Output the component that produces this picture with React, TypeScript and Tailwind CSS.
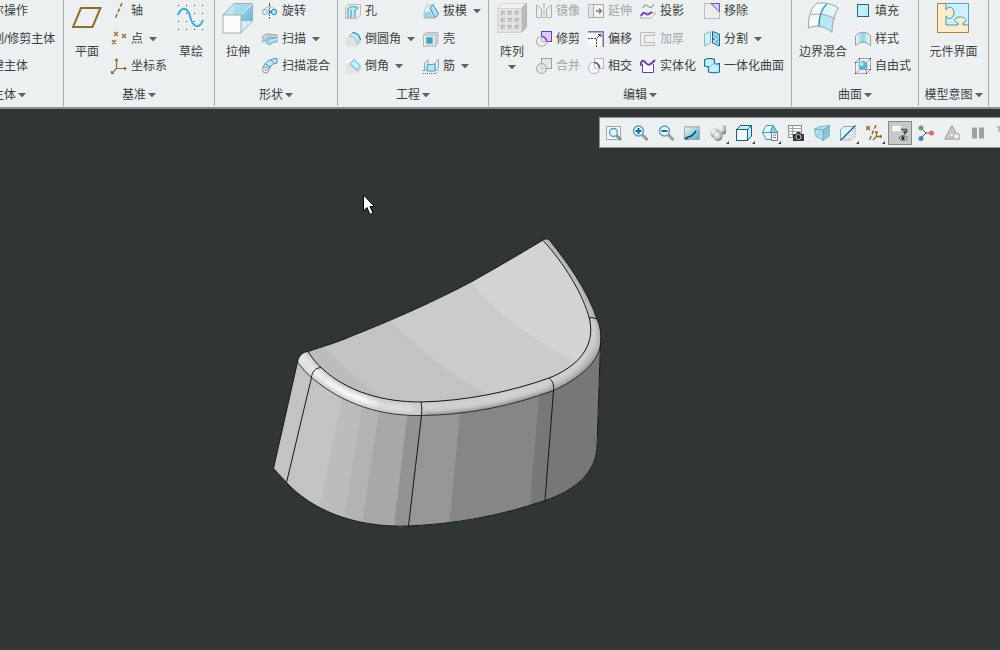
import React from 'react';

interface Tool {
  label: string;
  icon?: React.ReactNode;
  menu?: boolean;
  disabled?: boolean;
}

const BROWN = '#8f6c2f';
const BLUE = '#1f7fa8';
const PURPLE = '#6b3fa0';
const GREY = '#9da1a3';

const Small: React.FC<{ children: React.ReactNode }> = ({ children }) => (
  <svg className="h-4 w-4 shrink-0" viewBox="0 0 16 16" fill="none" aria-hidden="true">
    {children}
  </svg>
);

const Big: React.FC<{ children: React.ReactNode }> = ({ children }) => (
  <svg className="h-8 w-8 shrink-0" viewBox="0 0 32 32" fill="none" aria-hidden="true">
    {children}
  </svg>
);

const Caret: React.FC = () => (
  <svg className="h-1 w-2 shrink-0" viewBox="0 0 8 4" aria-hidden="true">
    <path d="M0 0H8L4 4.500Z" fill="#5f6466" />
  </svg>
);

const grid = (xs: number[], ys: number[]) => xs.flatMap(x => ys.map(y => [x, y]));

/* ---------- Large ribbon icons ---------- */

const planeIcon = (
  <Big>
    <path d="M10 6H29.500L21.500 25H2Z" stroke={BROWN} strokeWidth="2" />
  </Big>
);

const sketchIcon = (
  <Big>
    {grid([3, 11, 19, 27], [3, 11, 19, 27]).map(([x, y]) => (
      <rect key={`${x}-${y}`} x={x} y={y} width="1" height="1" fill="#444" />
    ))}
    <path d="M3 13C6 5 12 4 15 14C17 24 24 29 28 18" stroke="#3cabd9" strokeWidth="2" />
  </Big>
);

const extrudeIcon = (
  <Big>
    <defs>
      <linearGradient id="glass" x1="0" y1="0" x2="1" y2="1">
        <stop stopColor="#b4e4f3" />
        <stop offset="1" stopColor="#6db4d0" />
      </linearGradient>
    </defs>
    <path d="M1 13L12 1.500H30.500V19L19 30.500H1Z" fill="#d2f1fa" />
    <path d="M12 1.500H30.500V19H12Z" fill="url(#glass)" />
    <path d="M12 1.500H30.500L19 13H1Z" fill="#a8dff0" fillOpacity="0.600" />
    <path d="M19 30.500L30.500 19V25L24 30.500Z" fill="#ecf0f1" />
    <path d="M1 13L12 1.500H30.500V19L19 30.500" stroke="#a0adb1" />
    <path d="M19 13L30.500 1.500" stroke="#d8f3fb" />
    <rect x="1" y="13" width="18" height="18" fill="#fcfcfd" stroke="#a5aaac" />
  </Big>
);

const patternIcon = (
  <Big>
    <path d="M1.500 6.500L6 1.500H30.500L25 6.500Z" fill="#f3f3f3" stroke="#d0d2d3" />
    <path d="M25.500 6.500L30.500 1.500V25L25.500 30.500Z" fill="#b9bbbc" stroke="#b1b3b4" />
    <rect x="1.500" y="6.500" width="24" height="24" fill="#e0e1e1" stroke="#d0d2d3" />
    {grid([5, 12, 19], [9, 16, 23]).map(([x, y]) => (
      <React.Fragment key={`${x}-${y}`}>
        <rect x={x} y={y} width="4" height="4" fill="#a9abac" />
        <rect x={x + 1} y={y + 1} width="3" height="3" fill="#c9cbcc" />
      </React.Fragment>
    ))}
  </Big>
);

const boundaryIcon = (
  <Big>
    <path d="M9 1.500C18 0 26 2 31.500 6C27 13 25 20 25 30.500C20 25 9 22 1.500 26C1 17 3 8 9 1.500Z" fill="#f8f9fa" />
    <path d="M14 12C20 13 24 15 28 18C26 21 25 26 25 30.500C21 27 17 25 12 24C12 19 12.500 16 14 12Z" fill="#b9e8f7" />
    <path d="M20 2C26 3 29 4 31.500 6C30 9 29 13 28 18C24 15 20 13 14 12C15 8 17 5 20 2Z" fill="#dff4fb" />
    <path d="M4 13C10 11 20 12 28 17M9 1.500C18 0 26 2 31.500 6C27 13 25 20 25 30.500C20 25 9 22 1.500 26C1 17 3 8 9 1.500" stroke="#9da1a3" />
    <path d="M20 2C15 6 12 14 12 24" stroke="#2c9bc0" strokeWidth="1.500" />
  </Big>
);

const componentIcon = (
  <Big>
    <rect x="0.500" y="1.500" width="31" height="29" fill="#cdf1fc" stroke="#5aa5bd" />
    <path d="M1 2H9V8C11 4 16 4 17 10C17 16 12 19 9 14V23H21V21C16 20 17 15 23 15C30 15 30 20 26 21V23H31V30H1Z" fill="#fdecce" />
    <path d="M9 2V8C11 4 16 4 17 10C17 16 12 19 9 14V23H21V21C16 20 17 15 23 15C30 15 30 20 26 21V23H31" stroke="#4f93a8" />
    <path d="M9 1.500H0.500V30.500H31.500V23" stroke="#b08340" />
  </Big>
);

/* ---------- Small ribbon icons ---------- */

const axisIcon = (
  <Small>
    <path d="M11 0L4 16" stroke={BROWN} strokeWidth="1.500" strokeDasharray="4 2" />
  </Small>
);

const pointIcon = (
  <Small>
    <path d="M3 1L7 5M7 1L3 5M11 3L15 7M15 3L11 7M1 9L5 13M5 9L1 13" stroke={BROWN} strokeWidth="1.400" />
  </Small>
);

const csysIcon = (
  <Small>
    <path d="M5.500 1V10.500H15M5.500 10.500L0.500 15.500M4 3L5.500 1L7 3M13 9L15 10.500L13 12M0.500 13V15.500H3" stroke={BROWN} strokeWidth="1.200" />
  </Small>
);

const revolveIcon = (
  <Small>
    <path d="M7.500 0V16" stroke="#555" strokeDasharray="4 1 1 1" />
    <path d="M1 8C1 3 14 3 14 8" stroke="#a9c5ce" />
    <circle cx="3" cy="9" r="2.500" fill="#eef1f2" stroke={GREY} />
    <circle cx="12" cy="9" r="2.700" fill="#a9e2f8" stroke="#2b8fb5" />
    <path d="M6 6.500L9.500 9L6 11.500" stroke="#2b8fb5" />
  </Small>
);

const sweepIcon = (
  <Small>
    <path d="M0 7C1 4 4 3 6 3L15 4V7L8 6C5 6 5 7 5 8L0 11Z" fill="#d0d3d4" stroke="#979c9e" />
    <path d="M4 8L15 7V11C12 11 9 12 8 14L4 12Z" fill="#9fd5e8" stroke="#79b4c8" />
    <path d="M8 10L15 8" stroke="#d9f2fa" />
  </Small>
);

const sweptBlendIcon = (
  <Small>
    <path d="M1 10C3 4 7 1 15 0.500V5L11 6C8 8 7 12 5 15Z" fill="#bfe7f4" stroke="#4692ad" />
    <path d="M9 2L12 5.500M4 6L8 9" stroke="#4692ad" />
    <circle cx="3.500" cy="12" r="3" fill="#f5f6f6" stroke="#8d9294" />
    <circle cx="3.500" cy="12" r="0.800" fill="#555" />
  </Small>
);

const holeIcon = (
  <Small>
    <path d="M0.500 4L4 1.500H15.500V12L12 15.500H0.500Z" fill="#e9ebec" stroke="#b9bdbf" />
    <path d="M3 6C4 3 11 3 13 5L10 7V15H5V7Z" fill="#b9e9f8" />
    <path d="M3 15V6C4 3 11 3 13 5L10 7V15M6 7V15" stroke="#3b95b5" />
  </Small>
);

const roundIcon = (
  <Small>
    <path d="M0.500 5.500H6C10 7 11 9 11 15.500H0.500Z" fill="#e1e3e3" />
    <path d="M0.500 5L4.500 1H8L4 5.500Z" fill="#f8f9f9" />
    <path d="M4 5L7.500 1.500C12 2 15 5 15.500 9L11.500 12C11 8 9 5.500 4 5Z" fill="#bfe9f6" stroke="#8cbccb" />
    <path d="M7.500 1.500C12 2 15 5 15.500 9" stroke="#2889aa" strokeWidth="1.200" />
    <path d="M11.500 12.500L15.500 9.500V12L11.500 15.500Z" fill="#cfd2d3" />
  </Small>
);

const chamferIcon = (
  <Small>
    <path d="M0.500 5.500H5L11 11V15.500H0.500Z" fill="#e1e3e3" />
    <path d="M0.500 5L4.500 1H9L5 5.500Z" fill="#f8f9f9" />
    <path d="M5 5.500L9 1.500L15.500 8L11.500 12Z" fill="#c4f1fd" stroke="#4fa3bf" />
    <path d="M11.500 12.500L15.500 8.500V12L11.500 15.500Z" fill="#cfd2d3" />
  </Small>
);

const draftIcon = (
  <Small>
    <path d="M1 9L4 2H9L7 13H1Z" fill="#d9f1f8" stroke="#b7c9cf" />
    <path d="M1 9H7L11 15H1Z" fill="#9ecfe0" />
    <path d="M7 5L10 1.500L15.500 11L12 15Z" fill="#b4e1f0" stroke="#3b93b1" />
    <path d="M0.500 15H12" stroke="#a9b5b9" />
  </Small>
);

const shellIcon = (
  <Small>
    <path d="M0.500 4L3.500 1.500H15V12L12.500 15H0.500Z" fill="#d6d9da" stroke="#b3b7b9" />
    <rect x="0.500" y="4" width="12" height="11" fill="#f1f3f3" stroke="#b3b7b9" />
    <rect x="3" y="6" width="7" height="7" fill="#4e9fbe" stroke="#a2d9ec" />
  </Small>
);

const ribIcon = (
  <Small>
    <path d="M1.500 13V5L5 2V10ZM12 13V5L15.500 1V10Z" stroke="#7fb2c3" fill="#e2f2f7" />
    <path d="M4 7L12 6V13H4Z" fill="#b7e5f5" stroke="#4b9bb7" />
    <path d="M0 12.500H2M0 15.500H13L15.500 12" stroke="#666" strokeDasharray="1 1" />
  </Small>
);

const mirrorIcon = (
  <Small>
    <path d="M0.500 2L5.500 6V14.500H0.500ZM15.500 2L10.500 6V14.500H15.500Z" fill="#eceeee" stroke="#adb0b2" />
    <path d="M8 0V16" stroke="#adb0b2" strokeDasharray="5 1" />
  </Small>
);

const trimIcon = (
  <Small>
    <rect x="5.500" y="0.500" width="10" height="10" fill="#d9cbf3" stroke={PURPLE} />
    <circle cx="5.500" cy="10.500" r="5" fill="#eceff0" stroke={GREY} />
    <path d="M5.500 5.500A5 5 0 0 1 10.500 10.500" stroke="#7d35c8" strokeWidth="1.500" />
    <path d="M5.500 5V10.500H10.500" stroke="#b5b8ba" />
  </Small>
);

const mergeIcon = (
  <Small>
    <rect x="5.500" y="0.500" width="10" height="10" fill="#e6e8e8" stroke={GREY} />
    <circle cx="5.500" cy="10.500" r="5" fill="#e6e8e8" stroke={GREY} />
    <path d="M5.500 6V10.500H10" stroke="#c3c6c7" />
  </Small>
);

const intersectIcon = (
  <Small>
    <rect x="6.500" y="0.500" width="9" height="10" fill="#f7f8f8" stroke="#b3b7b9" />
    <circle cx="6" cy="10" r="5.500" fill="#f4f5f6" stroke="#b3b7b9" />
    <path d="M6.500 5V10.500H11" stroke="#c3c6c7" />
    <path d="M6 4.500A5.500 5.500 0 0 1 11.500 10" stroke={PURPLE} strokeWidth="1.500" />
  </Small>
);

const extendIcon = (
  <Small>
    <rect x="0.500" y="1.500" width="5" height="13" fill="#e5e7e7" stroke="#b3b7b9" />
    <rect x="5.500" y="1.500" width="10" height="13" fill="#f2f4f4" stroke="#a3a7a9" />
    <path d="M8 8H13M11 5.500L13.500 8L11 10.500" stroke="#777b7d" strokeWidth="1.300" />
  </Small>
);

const offsetIcon = (
  <Small>
    <rect x="0" y="0" width="16" height="16" fill="#f8f9f9" />
    <path d="M0 1H15V16" stroke="#b9a6d8" strokeWidth="2" />
    <path d="M0 0.500H15.500V16" stroke="#84709f" />
    <path d="M0 7.500H8.500V16" stroke="#444" strokeDasharray="2 1" />
    <path d="M9 7L13 3M10 3.500H13V6" stroke="#333" />
  </Small>
);

const projectIcon = (
  <Small>
    <path d="M3 5C5 0 7 2 9 4C11 5 13 3 14 1" stroke={GREY} strokeWidth="1.200" />
    <path d="M0 15L4 10H15.500L11 15Z" fill="#f4f5f6" stroke="#afb2b4" />
    <path d="M1 13C3 8 5 10 7 11.500C9 12 10 10 12 9" stroke="#7831bc" strokeWidth="1.800" />
  </Small>
);

const thickenIcon = (
  <Small>
    <path d="M14.500 1.500H0.500V14.500H14.500V11.500H4.500V4.500H14.500Z" fill="#eceeee" stroke="#b9bcbd" />
  </Small>
);

const solidifyIcon = (
  <Small>
    <path d="M2.500 6V14.500H13.500V6" fill="#fbfbfc" stroke={PURPLE} />
    <path d="M0.500 8C1 1 4 2 6 5C9 9 12 5 15 2" stroke={PURPLE} strokeWidth="2" />
  </Small>
);

const removeIcon = (
  <Small>
    <rect x="0.500" y="0.500" width="15" height="15" fill="#eceeee" stroke="#c3bcbf" />
    <path d="M7 0.500H15.500V9Z" fill="#d9ccf5" stroke="#7650b6" />
  </Small>
);

const splitIcon = (
  <Small>
    <path d="M0.500 3L6.500 0.500V12L0.500 15Z" fill="#d2f2fb" stroke="#8bb5c3" />
    <path d="M8.500 0.500L15.500 3V15L8.500 12Z" fill="#b4e2f1" stroke="#0e6d91" />
    <path d="M9 3L15 9M9 7L15 13M14 4L9 9M14 9L10 13" stroke="#0e6d91" strokeDasharray="1 1" />
  </Small>
);

const uniteIcon = (
  <Small>
    <path d="M0.500 2C4 0 7 0 10.500 1.500V5C12 7 14 6 15.500 5.500V14C12 15 8 15 4.500 14V9L0.500 8Z" fill="#c5edfa" stroke="#1b708f" strokeWidth="1.200" />
    <path d="M10.500 5L5 9" stroke="#8cc5d7" />
  </Small>
);

const fillIcon = (
  <Small>
    <rect x="2.500" y="1.500" width="11" height="12" fill="#b9eafa" stroke="#186d8c" />
    <path d="M3 8L9 2M3 12L13 2M6 13L13 6" stroke="#e8f9fe" />
  </Small>
);

const styleIcon = (
  <Small>
    <defs>
      <linearGradient id="sheet">
        <stop stopColor="#f4f6f7" />
        <stop offset="0.500" stopColor="#8fcee4" />
        <stop offset="0.800" stopColor="#d5f0f8" />
      </linearGradient>
    </defs>
    <path d="M0.500 5C4 0 12 0 15.500 5V15C12 10 4 10 0.500 15Z" fill="url(#sheet)" stroke={GREY} />
  </Small>
);

const freestyleIcon = (
  <Small>
    <path d="M0.500 4.500H11.500V15.500H0.500ZM0.500 4.500L4.500 0.500H15.500V11.500L11.500 15.500M11.500 4.500L15.500 0.500M4.500 0.500V11.500H15.500M4.500 11.500L0.500 15.500" stroke="#a0a5a7" />
    <circle cx="8" cy="7.500" r="4.500" fill="#60b4d2" />
    <circle cx="6.500" cy="6" r="2" fill="#b9e8f6" />
    {[[0, 4], [4, 0], [15, 0], [0, 15], [11, 15], [15, 11]].map(([x, y]) => (
      <rect key={`${x}-${y}`} x={x} y={y} width="1" height="1" fill="#222" />
    ))}
  </Small>
);

/* ---------- Floating view toolbar icons ---------- */

const lens = (
  <>
    <path d="M10.500 10L15.500 15" stroke="#85898b" strokeWidth="3" />
    <path d="M11 10.500L15 14.500" stroke="#cfd1d2" />
    <circle cx="6.500" cy="6" r="5" fill="#eef8fc" stroke="#5a9cb9" strokeWidth="1.400" />
  </>
);

const viewTools: Tool[] = [
  {
    label: '重新调整',
    icon: (
      <Small>
        <rect x="0.500" y="1.500" width="14" height="13" fill="#f6f7f7" stroke="#a2a6a8" />
        <path d="M10.500 10.500L15 15" stroke="#85898b" strokeWidth="2.500" />
        <circle cx="7.500" cy="7.500" r="4" fill="#e6f5fa" stroke="#5a9cb9" strokeWidth="1.400" />
      </Small>
    ),
  },
  { label: '放大', icon: <Small>{lens}<path d="M3.500 6H9.500M6.500 3V9" stroke="#186a91" strokeWidth="2" /></Small> },
  { label: '缩小', icon: <Small>{lens}<path d="M3.500 6H9.500" stroke="#186a91" strokeWidth="2" /></Small> },
  {
    label: '重画',
    icon: (
      <Small>
        <defs>
          <linearGradient id="repaint" x1="0" y1="0" x2="1" y2="1">
            <stop stopColor="#f2f9fb" />
            <stop offset="1" stopColor="#4fa9c9" />
          </linearGradient>
        </defs>
        <rect x="0.500" y="1.500" width="15" height="13" fill="url(#repaint)" stroke="#a9adaf" />
        <path d="M0 2H16" stroke="#b9bcbe" strokeWidth="1.500" />
        <path d="M1 14L4 12C8 12 10 9 12 6" stroke="#14485e" strokeWidth="1.600" />
        <path d="M1 12L5 14.500H1Z" fill="#38596a" />
      </Small>
    ),
  },
  {
    label: '渲染选项',
    menu: true,
    icon: (
      <Small>
        <defs>
          <radialGradient id="ball" cx="0.350" cy="0.300" r="0.800">
            <stop stopColor="#fff" />
            <stop offset="0.500" stopColor="#c6c8c9" />
            <stop offset="1" stopColor="#6d7072" />
          </radialGradient>
        </defs>
        <path d="M8 3C10 0 14 0 16 1V8C14 10 11 10 8 8Z" fill="url(#ball)" />
        <circle cx="4.500" cy="8" r="4.500" fill="url(#ball)" />
        <circle cx="8" cy="11.500" r="4.500" fill="url(#ball)" />
      </Small>
    ),
  },
  {
    label: '显示样式',
    menu: true,
    icon: (
      <Small>
        <path d="M0.500 4.500L4.500 0.500H15.500V11L11.500 15.500H0.500Z" fill="#c8edf8" stroke="#17607e" />
        <rect x="0.500" y="4.500" width="11" height="11" fill="#f5f8f9" stroke="#17607e" />
        <path d="M11.500 4.500L15.500 0.500" stroke="#17607e" />
      </Small>
    ),
  },
  {
    label: '已保存方向',
    menu: true,
    icon: (
      <Small>
        <path d="M4 0.500H11L15.500 7.500L11 14.500H4L0.500 7.500Z" fill="#e2f5fb" stroke="#4699b5" />
        <path d="M11 0.500L15.500 7.500H8Z" fill="#8fc9dd" stroke="#4699b5" />
        <path d="M0.500 7.500H10" stroke="#4699b5" />
        <rect x="9.500" y="7.500" width="6" height="8" fill="#f7f8f8" stroke="#7b8082" />
        <path d="M11 10H14M11 12.500H14" stroke="#7b8082" />
      </Small>
    ),
  },
  {
    label: '视图管理器',
    icon: (
      <Small>
        <rect x="0.500" y="0.500" width="13" height="12" fill="#f8f8f8" stroke="#888c8e" />
        <path d="M0 3.500H14M0 6.500H14M0 9.500H14M4.500 0V13" stroke="#a4a8aa" />
        <path d="M5 9H8L9 7H12L13 9H16V16H5Z" fill="#393c3e" />
        <circle cx="10.500" cy="12" r="2.500" fill="#202122" stroke="#c5c7c8" />
      </Small>
    ),
  },
  {
    label: '透视图',
    icon: (
      <Small>
        <path d="M0.500 4L6 1.500L15.500 0.500V11L9 15.500L1.500 11Z" fill="#b9e0ed" stroke="#7fb9cc" />
        <path d="M9.500 5L15.500 0.500V11L9 15.500Z" fill="#87c4d9" />
        <path d="M0.500 4L9.500 5L15.500 0.500M9.500 5L9 15.500" stroke="#5da5bd" />
        <path d="M6 1.500V9L1.500 11M6 9L15 11" stroke="#9acbdb" />
      </Small>
    ),
  },
  {
    label: '截面',
    menu: true,
    icon: (
      <Small>
        <path d="M0.500 15V4.500L4 1.500H14" fill="#e2f3f9" stroke="#77abbe" />
        <path d="M15 3V11L11 15H3" stroke="#777b7d" strokeDasharray="1 1" />
        <path d="M5 14L14 5M8 14L14 8M10 14L14 10" stroke="#b4b7b9" strokeDasharray="1 1" />
        <path d="M0.500 15.500L15.500 0.500" stroke="#17607e" strokeWidth="1.300" />
      </Small>
    ),
  },
  {
    label: '基准显示过滤器',
    menu: true,
    icon: (
      <Small>
        <path d="M0 1L4 5M4 1L0 5" stroke={BROWN} strokeWidth="1.500" />
        <path d="M10 0L3 16" stroke={BROWN} strokeWidth="1.500" strokeDasharray="4 2" />
        <path d="M10.500 6V11.500H16M10.500 11.500L7 15" stroke={BROWN} strokeWidth="1.300" />
        <path d="M9 8L10.500 6L12 8M14 10L16 11.500L14 13" stroke={BROWN} />
      </Small>
    ),
  },
  {
    label: '注释显示',
    icon: (
      <Small>
        <rect x="0" y="0.500" width="9" height="6" fill="#fff8e2" stroke="#d8d1bd" />
        <path d="M9 4.500H14.500V7" stroke="#4a4d4f" strokeWidth="1.300" />
        <path d="M11 6H16L12.500 10Z" fill="#4a4d4f" />
        <path d="M7 13C9 10 13 10 15.500 13C13 16 9 16 7 13Z" fill="#f5f5f5" stroke="#4a4d4f" />
        <circle cx="11" cy="13" r="1.800" fill="#222" />
      </Small>
    ),
  },
  {
    label: '旋转中心',
    icon: (
      <Small>
        <path d="M3 3L8 8L14 8M8 8L3 13" stroke="#555" />
        <circle cx="3" cy="3" r="2.500" fill="#5fa45e" />
        <circle cx="13.500" cy="8" r="2.500" fill="#d4706c" />
        <circle cx="3" cy="13.500" r="2.500" fill="#3c8bad" />
      </Small>
    ),
  },
  {
    label: '模拟',
    disabled: true,
    icon: (
      <Small>
        <path d="M8 1L15 14H1Z" fill="#d3d5d6" stroke="#a9acae" strokeWidth="1.500" />
        <path d="M8 6L11 12H5Z" fill="#f1f2f2" stroke="#a9acae" />
        <circle cx="12.500" cy="11.500" r="3.500" fill="#d6d8d9" stroke="#b1b4b6" />
        <path d="M11.500 9.500L14.500 11.500L11.500 13.500Z" fill="#fff" />
      </Small>
    ),
  },
  { label: '暂停', disabled: true, icon: <Small><path d="M2 2.500H7V13.500H2ZM9 2.500H14V13.500H9Z" fill="#a0a3a5" /></Small> },
  { label: '选项', disabled: true, icon: <Small><path d="M1 2H10M3 2V6H6L5 10" stroke="#a9acae" strokeWidth="1.500" /></Small> },
];

/* ---------- Ribbon parts ---------- */

const ToolButton: React.FC<Tool> = ({ label, icon, menu, disabled }) => (
  <button
    type="button"
    disabled={disabled}
    className="flex h-7 items-center gap-1 whitespace-nowrap disabled:text-[#a3a7a9]"
  >
    {icon}
    <span>{label}</span>
    {menu && <span className="ml-0.5 flex"><Caret /></span>}
  </button>
);

const ToolColumn: React.FC<{ tools: Tool[]; className?: string }> = ({ tools, className = '' }) => (
  <div className={`-mt-[3px] flex flex-col items-start ${className}`}>
    {tools.map(tool => <ToolButton key={tool.label} {...tool} />)}
  </div>
);

const BigButton: React.FC<Tool & { className?: string }> = ({ label, icon, menu, className = '' }) => (
  <button type="button" className={`flex flex-col items-center self-start whitespace-nowrap pt-0.5 ${className}`}>
    {icon}
    <span className="mt-[9px] leading-[18px]">{label}</span>
    {menu && <span className="mt-1 flex"><Caret /></span>}
  </button>
);

const Group: React.FC<{ title: string; className: string; children: React.ReactNode }> = ({ title, className, children }) => (
  <section aria-label={title} className={`mb-px flex shrink-0 flex-col border-r border-[#a4a9ab] ${className}`}>
    <div className="flex h-20">{children}</div>
    <button type="button" className="mt-1 flex h-[22px] items-center justify-center gap-0.5 whitespace-nowrap">
      {title}
      <Caret />
    </button>
  </section>
);

const Ribbon: React.FC = () => (
  <header className="flex overflow-hidden border-b-2 border-[#87908f] bg-[#ecf0f1]">
    <Group title="主体" className="-ml-[45px] w-[109px]">
      <ToolColumn className="ml-[25px]" tools={[{ label: '布尔操作' }, { label: '分割/修剪主体' }, { label: '新建主体' }]} />
    </Group>
    <Group title="基准" className="w-[151px]">
      <BigButton label="平面" icon={planeIcon} className="ml-[7px]" />
      <ToolColumn
        className="ml-2 w-[62px]"
        tools={[
          { label: '轴', icon: axisIcon },
          { label: '点', icon: pointIcon, menu: true },
          { label: '坐标系', icon: csysIcon },
        ]}
      />
      <BigButton label="草绘" icon={sketchIcon} className="ml-0.5" />
    </Group>
    <Group title="形状" className="w-[123px]">
      <BigButton label="拉伸" icon={extrudeIcon} className="ml-[7px]" />
      <ToolColumn
        className="ml-2"
        tools={[
          { label: '旋转', icon: revolveIcon },
          { label: '扫描', icon: sweepIcon, menu: true },
          { label: '扫描混合', icon: sweptBlendIcon },
        ]}
      />
    </Group>
    <Group title="工程" className="w-[151px]">
      <ToolColumn
        className="ml-[7px] w-[78px]"
        tools={[
          { label: '孔', icon: holeIcon },
          { label: '倒圆角', icon: roundIcon, menu: true },
          { label: '倒角', icon: chamferIcon, menu: true },
        ]}
      />
      <ToolColumn
        tools={[
          { label: '拔模', icon: draftIcon, menu: true },
          { label: '壳', icon: shellIcon },
          { label: '筋', icon: ribIcon, menu: true },
        ]}
      />
    </Group>
    <Group title="编辑" className="w-[303px]">
      <BigButton label="阵列" icon={patternIcon} menu className="ml-[7px]" />
      <ToolColumn
        className="ml-2 w-[52px]"
        tools={[
          { label: '镜像', icon: mirrorIcon, disabled: true },
          { label: '修剪', icon: trimIcon },
          { label: '合并', icon: mergeIcon, disabled: true },
        ]}
      />
      <ToolColumn
        className="w-[52px]"
        tools={[
          { label: '延伸', icon: extendIcon, disabled: true },
          { label: '偏移', icon: offsetIcon },
          { label: '相交', icon: intersectIcon },
        ]}
      />
      <ToolColumn
        className="w-16"
        tools={[
          { label: '投影', icon: projectIcon },
          { label: '加厚', icon: thickenIcon, disabled: true },
          { label: '实体化', icon: solidifyIcon },
        ]}
      />
      <ToolColumn
        tools={[
          { label: '移除', icon: removeIcon },
          { label: '分割', icon: splitIcon, menu: true },
          { label: '一体化曲面', icon: uniteIcon },
        ]}
      />
    </Group>
    <Group title="曲面" className="w-[127px]">
      <BigButton label="边界混合" icon={boundaryIcon} className="ml-[7px]" />
      <ToolColumn
        className="ml-2"
        tools={[
          { label: '填充', icon: fillIcon },
          { label: '样式', icon: styleIcon },
          { label: '自由式', icon: freestyleIcon },
        ]}
      />
    </Group>
    <Group title="模型意图" className="w-[70px]">
      <BigButton label="元件界面" icon={componentIcon} className="mx-auto" />
    </Group>
  </header>
);

const ViewToolbar: React.FC = () => (
  <div role="toolbar" aria-label="视图" className="flex h-[31px] w-[401px] items-center overflow-hidden border border-r-0 border-[#8b9394] bg-[#ecf0f1] pl-px">
    {viewTools.map(({ label, icon, menu, disabled }) => (
      <button
        key={label}
        type="button"
        title={label}
        aria-label={label}
        disabled={disabled}
        className={`relative mx-px flex h-6 w-6 shrink-0 items-center justify-center border ${
          label === '注释显示' ? 'border-[#84898b] bg-[#c6c9ca]' : 'border-transparent'
        }`}
      >
        {icon}
        {menu && (
          <svg className="absolute right-0 bottom-0 h-[3px] w-[3px]" viewBox="0 0 3 3" aria-hidden="true">
            <path d="M3 0V3H0Z" fill="#3c3f41" />
          </svg>
        )}
      </button>
    ))}
  </div>
);

/* ---------- Solid model ---------- */

const TOP_INNER = 'C312 358 316 363 321 367.500C348 393 385 402 421 402C465 401 510 392 549 378C577 367 596 347 589.500 319C583 294 564 263 543 240.500';
const LOWER_EDGE = 'M297.500 362C302 368 306 373 311.500 377.500C345 406 383 416 421.500 415.500C467 415 512 406 553.500 390.500C577 380 600 362 600.500 343';
const SILHOUETTE =
  'M308 351.500C324 346 339 342 353 335.500C395 319 435 301 472 281.500C496 268 520 254 543 240C546 238 549 239 551 242C566 261 587 289 597 319C601 327 601 335 600.500 345L597 447C596 473 574 491 545 500.500C500 516 455 524 408.500 526C352 528 310 508 286.500 482.500L273.500 468.500L297.500 362C299 355 303 352 308 351.500Z';

const Model: React.FC = () => (
  <svg className="absolute top-[121px] left-[264px] h-[306px] w-[346px]" viewBox="264 230 346 306" fill="none" role="img" aria-label="实体模型">
    <defs>
      <clipPath id="body"><path d={SILHOUETTE} /></clipPath>
      <clipPath id="topFace">
        <path d={`M308 351.500${TOP_INNER}C520 254 496 268 472 281.500C435 301 395 319 353 335.500C339 342 324 346 308 351.500Z`} />
      </clipPath>
      <clipPath id="wall">
        <path d={`${LOWER_EDGE}L610 345V536H264V362Z`} />
      </clipPath>
      <filter id="soft" x="-20%" y="-20%" width="140%" height="140%">
        <feGaussianBlur stdDeviation="2" />
      </filter>
    </defs>

    {/* rounded edge */}
    <g clipPath="url(#body)">
      <rect x="264" y="230" width="346" height="306" fill="#cacaca" />
      <g filter="url(#soft)" strokeLinecap="round">
        <path d="M548 240C566 262 587 292 596 320C603 350 580 374 552 387" stroke="#bababa" strokeWidth="9" />
        <path d="M425 416C470 415 512 406 554 391C578 381 598 363 604 342C604 325 593 297 575 268L552 238" stroke="#7c7c7c" strokeWidth="4" />
        <path d="M421 407C465 406 512 397 550 382C580 370 598 348 593 322" stroke="#d4d4d4" strokeWidth="4" />
        <path d="M300 357L316 373" stroke="#e2e5e4" strokeWidth="11" />
        <path d="M316 373C345 399 378 407 412 409" stroke="#dedfdf" strokeWidth="6" />
        <path d="M316 372C340 393 356 399 376 404" stroke="#f0f1f1" strokeWidth="6" />
        <path d="M329 382C340 390 352 396 366 400" stroke="#fff" strokeWidth="5" />
      </g>
    </g>

    {/* top face shading bands */}
    <g clipPath="url(#topFace)">
      <rect x="264" y="230" width="346" height="306" fill="#bcbcbc" />
      <path d="M322 345C340 364 358 382 382 398L450 420L620 380V220H400Z" fill="#c3c3c3" />
      <path d="M389 319C416 348 449 374 490 396L620 380V220H400Z" fill="#cbcbcb" />
      <path d="M470 281C497 315 535 340 577 363L620 350V220H480Z" fill="#d3d3d3" />
    </g>

    {/* side wall facets */}
    <g clipPath="url(#body)">
      <g clipPath="url(#wall)">
        <rect x="264" y="340" width="346" height="200" fill="#c3c3c3" />
        <path d="M345 385L316 525H620V330Z" fill="#bcbcbc" />
        <path d="M365 391L342 530H620V330Z" fill="#b3b3b3" />
        <path d="M381 398L361 530H620V330Z" fill="#a8a8a8" />
        <path d="M409 401L393.500 530H620V330Z" fill="#939393" />
        <path d="M421.500 415L408 530H620V330Z" fill="#969696" />
        <path d="M461 403L449 530H620V330Z" fill="#868686" />
        <path d="M540 385L528 530H620V330Z" fill="#777" />
      </g>
    </g>

    <g stroke="#151717" strokeWidth="1">
      <path d={SILHOUETTE} />
      <path d={`M308 351.500${TOP_INNER}`} />
      <path d={LOWER_EDGE} strokeWidth="0.800" />
      <path d="M321 367.500C315 368 312 372 311.500 377.500L286.500 482.500" />
      <path d="M421 402C422 407 422 411 421.500 415.500L408.500 526" />
      <path d="M549 378C553 381 554 385 553.500 390.500L545 500.500" />
      <path d="M589 318C592 317 594 318 597 319" />
    </g>
  </svg>
);

const App: React.FC = () => (
  <div className="flex min-h-screen flex-col overflow-hidden bg-[#303636] font-['Liberation_Sans','Noto_Sans_CJK_SC',sans-serif] text-xs text-[#3c3f41]">
    <Ribbon />
    <main className="relative flex flex-1 flex-col items-end overflow-hidden pt-2">
      <ViewToolbar />
      <Model />
      {/* mouse pointer */}
      <svg className="absolute top-[85px] left-[363px] h-[22px] w-3" viewBox="0 0 12 22" aria-hidden="true">
        <path d="M0.500 1V17L4 13.500L7 20.500L10 19L7 12.500H11.500Z" fill="#fff" stroke="#000" />
      </svg>
    </main>
  </div>
);

export default App;
